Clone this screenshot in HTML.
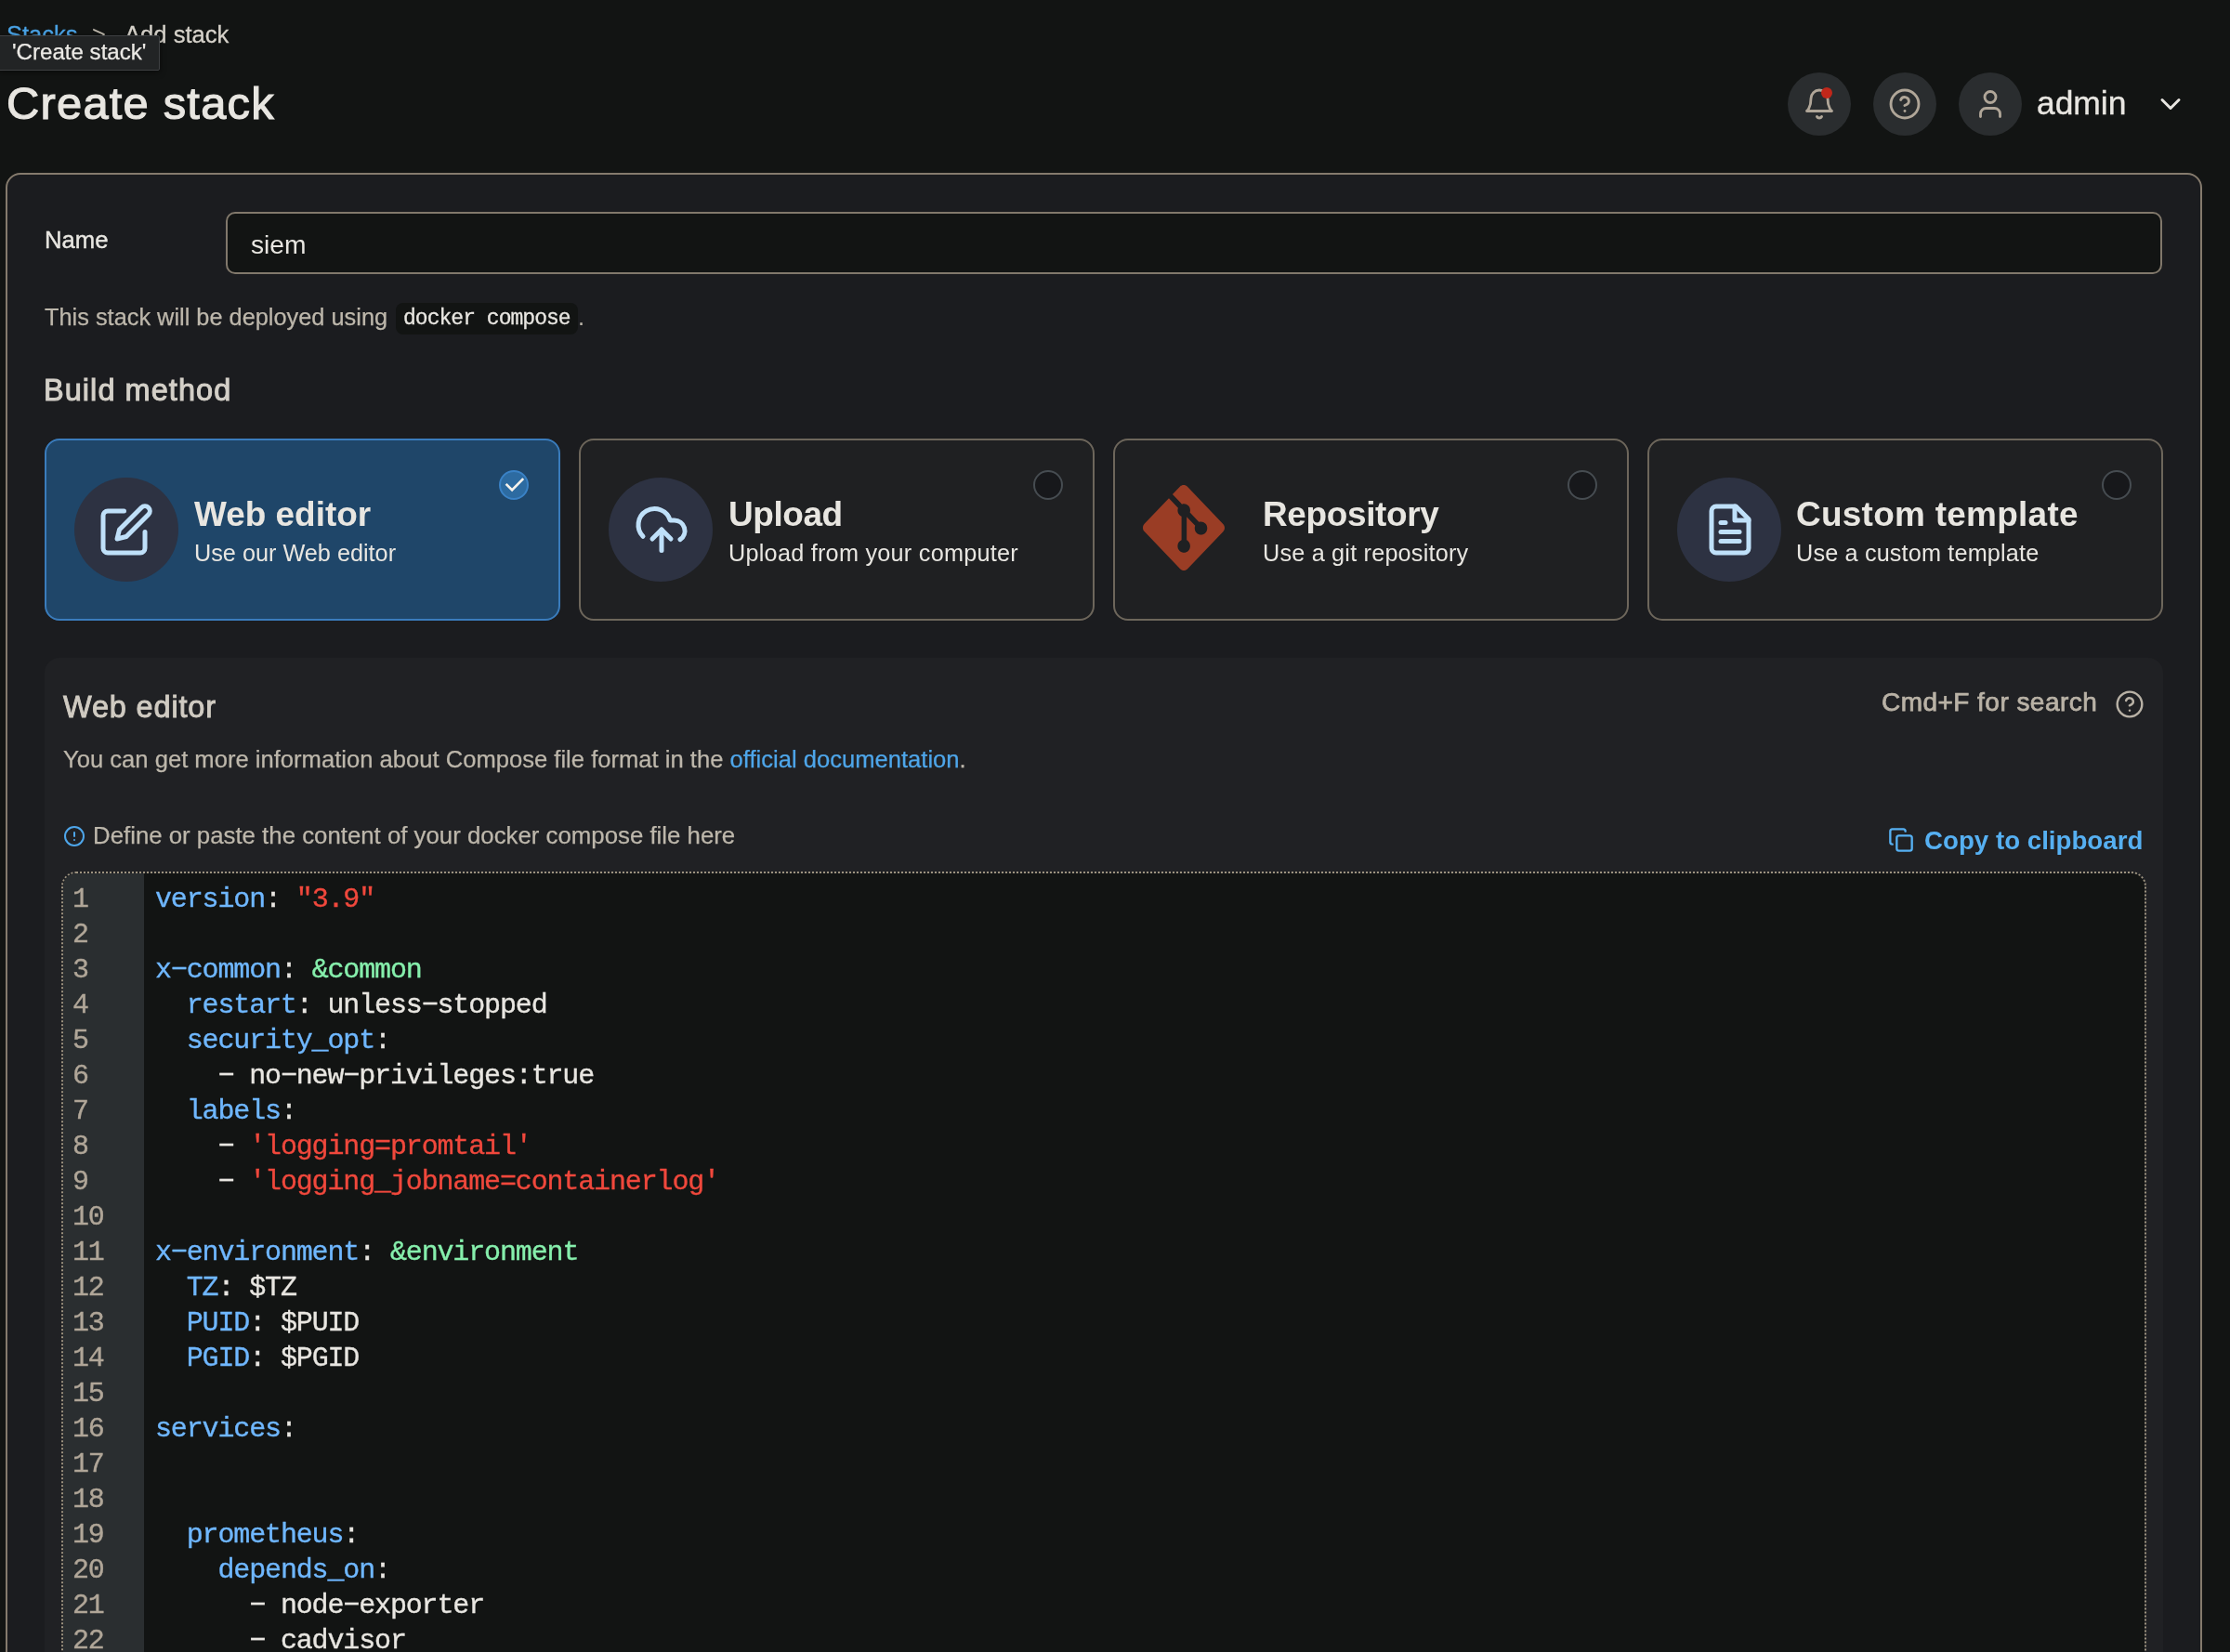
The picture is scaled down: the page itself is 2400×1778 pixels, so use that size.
<!DOCTYPE html>
<html><head><meta charset="utf-8"><title>Create stack</title>
<style>
html,body{margin:0;padding:0}
body{width:2400px;height:1778px;overflow:hidden;background:#121413;position:relative;font-family:"Liberation Sans",sans-serif;color:#e8e6e1}
.t{position:absolute;line-height:1;white-space:pre;will-change:transform}
.s{font-family:"Liberation Sans",sans-serif}
.m{font-family:"Liberation Mono",monospace}
.c{letter-spacing:-1.143px;-webkit-text-stroke:0.35px currentColor}
.abs{position:absolute;box-sizing:border-box}
svg{position:absolute;overflow:visible}
.ic{fill:none;stroke-linecap:round;stroke-linejoin:round}
.k{color:#6fb7ff}.r{color:#f0483c}.g{color:#86efac}
</style></head><body>

<div class="t s" style="left:7px;top:24.71px;font-size:25.5px;color:#4aa3e6;-webkit-text-stroke:0.3px #4aa3e6;">Stacks</div>
<div class="t s" style="left:99px;top:24.71px;font-size:25.5px;color:#bdb7ab;">&gt;</div>
<div class="t s" style="left:133.5px;top:24.63px;font-size:25.6px;color:#d6d2ca;-webkit-text-stroke:0.3px #d6d2ca;">Add stack</div>
<div class="abs" style="left:-2px;top:38px;width:174px;height:38px;background:#222425;border:1px solid #3e4042;border-radius:2px;box-shadow:0 2px 6px rgba(0,0,0,.5)"></div>
<div class="t s" style="left:12.6px;top:43.60px;font-size:24.1px;color:#eceae6;-webkit-text-stroke:0.25px #eceae6;">'Create stack'</div>
<div class="t s" style="left:6.5px;top:87.21px;font-size:48.9px;color:#e8e6e1;letter-spacing:1.2px;-webkit-text-stroke:1.1px #e8e6e1;">Create stack</div>
<div class="abs" style="left:1924px;top:78px;width:68px;height:68px;border-radius:50%;background:#2a2d2f"></div>
<div class="abs" style="left:2016px;top:78px;width:68px;height:68px;border-radius:50%;background:#2a2d2f"></div>
<div class="abs" style="left:2108px;top:78px;width:68px;height:68px;border-radius:50%;background:#2a2d2f"></div>
<svg class="ic" style="left:1940px;top:94px" width="36" height="36" viewBox="0 0 24 24" stroke="#b0a698" stroke-width="1.9"><path d="M6 8a6 6 0 0 1 12 0c0 7 3 9 3 9H3s3-2 3-9"/><path d="M10.3 21a1.94 1.94 0 0 0 3.4 0"/></svg>
<div class="abs" style="left:1960px;top:94px;width:12px;height:12px;border-radius:50%;background:#c0271a"></div>
<svg class="ic" style="left:2032px;top:94px" width="36" height="36" viewBox="0 0 24 24" stroke="#b0a698" stroke-width="1.9"><circle cx="12" cy="12" r="10"/><path d="M9.09 9a3 3 0 0 1 5.83 1c0 2-3 3-3 3"/><path d="M12 17h.01"/></svg>
<svg class="ic" style="left:2124px;top:94px" width="36" height="36" viewBox="0 0 24 24" stroke="#b0a698" stroke-width="1.9"><path d="M19 21v-2a4 4 0 0 0-4-4H9a4 4 0 0 0-4 4v2"/><circle cx="12" cy="7" r="4"/></svg>
<div class="t s" style="left:2191.8px;top:93.63px;font-size:35.4px;color:#e8e6e1;-webkit-text-stroke:0.35px #e8e6e1;">admin</div>
<svg class="ic" style="left:2318px;top:94px" width="36" height="36" viewBox="0 0 24 24" stroke="#e8e6e1" stroke-width="2"><path d="m6 9 6 6 6-6"/></svg>
<div class="abs" style="left:6px;top:186px;width:2364px;height:1700px;background:#1b1c1f;border:2px solid #857b6d;border-radius:16px"></div>
<div class="t s" style="left:48px;top:245.74px;font-size:25.7px;color:#e8e6e1;-webkit-text-stroke:0.4px #e8e6e1;">Name</div>
<div class="abs" style="left:243px;top:228px;width:2084px;height:67px;background:#121413;border:2px solid #81786b;border-radius:10px"></div>
<div class="t s" style="left:269.5px;top:248.93px;font-size:28.2px;color:#e8e6e1;">siem</div>
<div class="t s" style="left:48px;top:328.54px;font-size:25.35px;color:#bdb7ab;-webkit-text-stroke:0.25px currentColor;">This stack will be deployed using</div>
<div class="abs" style="left:426px;top:326px;width:196px;height:34px;background:#121413;border-radius:8px"></div>
<div class="t m" style="left:434px;top:332.37px;font-size:23px;color:#e8e6e1;letter-spacing:-0.97px;-webkit-text-stroke:0.3px #e8e6e1;">docker compose</div>
<div class="t s" style="left:622px;top:328.54px;font-size:25.35px;color:#bdb7ab;">.</div>
<div class="t s" style="left:47px;top:404.09px;font-size:32.5px;color:#d4d0c8;letter-spacing:1.05px;-webkit-text-stroke:1.0px #d4d0c8;">Build method</div>
<div class="abs" style="left:48px;top:472px;width:555px;height:196px;background:#1f4669;border:2px solid #3a7cbc;border-radius:16px"></div>
<div class="abs" style="left:80px;top:514px;width:112px;height:112px;border-radius:50%;background:#2d3242"></div>
<svg class="ic" style="left:106px;top:540px" width="60" height="60" viewBox="0 0 24 24" stroke="#bfe0f9" stroke-width="2"><path d="M11 4H4a2 2 0 0 0-2 2v14a2 2 0 0 0 2 2h14a2 2 0 0 0 2-2v-7"/><path d="M18.5 2.5a2.12 2.12 0 0 1 3 3L12 15l-4 1 1-4Z"/></svg>
<div class="t s" style="left:209px;top:535.62px;font-size:36.95px;color:#e8e6e1;font-weight:bold;letter-spacing:0px;">Web editor</div>
<div class="t s" style="left:209px;top:583.03px;font-size:25.25px;color:#e8e6e1;letter-spacing:0px;">Use our Web editor</div>
<div class="abs" style="left:537px;top:506px;width:32px;height:32px;border-radius:50%;background:#2d6ba1;border:2px solid #3a82c6"></div>
<svg style="left:537px;top:506px" width="32" height="32" viewBox="0 0 32 32" fill="none" stroke="#f6f2ec" stroke-width="2.7" stroke-linecap="butt" stroke-linejoin="miter"><path d="M7.6 14.9 14.1 21.4 26.2 9.1"/></svg>
<div class="abs" style="left:623px;top:472px;width:555px;height:196px;background:#1f2022;border:2px solid #6d665b;border-radius:16px"></div>
<div class="abs" style="left:655px;top:514px;width:112px;height:112px;border-radius:50%;background:#2d3242"></div>
<svg class="ic" style="left:682px;top:540px" width="60" height="60" viewBox="0 0 24 24" stroke="#bfe0f9" stroke-width="2"><path d="M4 14.899A7 7 0 1 1 15.71 8h1.79a4.5 4.5 0 0 1 2.5 8.242"/><path d="M12 12v9"/><path d="m16 16-4-4-4 4"/></svg>
<div class="t s" style="left:783.5px;top:535.62px;font-size:36.95px;color:#e8e6e1;font-weight:bold;letter-spacing:-0.4px;">Upload</div>
<div class="t s" style="left:783.5px;top:583.03px;font-size:25.25px;color:#e8e6e1;letter-spacing:0.24px;">Upload from your computer</div>
<div class="abs" style="left:1112px;top:506px;width:32px;height:32px;border-radius:50%;background:#17181b;border:2px solid #464c51"></div>
<div class="abs" style="left:1198px;top:472px;width:555px;height:196px;background:#1f2022;border:2px solid #6d665b;border-radius:16px"></div>
<svg style="left:1229.5px;top:522.3px" width="88" height="92" viewBox="0 0 24 24" preserveAspectRatio="none"><path fill="#9a3d25" d="M23.546 10.93L13.067.452c-.604-.603-1.582-.603-2.188 0L8.708 2.627l2.76 2.76c.645-.215 1.379-.07 1.889.441.516.515.658 1.258.438 1.9l2.658 2.66c.645-.223 1.387-.078 1.9.435.721.72.721 1.884 0 2.604-.719.719-1.881.719-2.6 0-.539-.541-.674-1.337-.404-1.996L12.86 8.955v6.525c.176.086.342.203.488.348.713.721.713 1.883 0 2.6-.719.721-1.889.721-2.609 0-.719-.719-.719-1.879 0-2.598.182-.18.387-.316.605-.406V8.835c-.217-.091-.424-.222-.6-.401-.545-.545-.676-1.342-.396-2.009L7.636 3.7.45 10.881c-.6.605-.6 1.584 0 2.189l10.48 10.477c.604.604 1.582.604 2.186 0l10.43-10.43c.605-.603.605-1.582 0-2.187"/></svg>
<div class="t s" style="left:1358.5px;top:535.62px;font-size:36.95px;color:#e8e6e1;font-weight:bold;letter-spacing:-0.35px;">Repository</div>
<div class="t s" style="left:1358.5px;top:583.03px;font-size:25.25px;color:#e8e6e1;letter-spacing:0.19px;">Use a git repository</div>
<div class="abs" style="left:1687px;top:506px;width:32px;height:32px;border-radius:50%;background:#17181b;border:2px solid #464c51"></div>
<div class="abs" style="left:1773px;top:472px;width:555px;height:196px;background:#1f2022;border:2px solid #6d665b;border-radius:16px"></div>
<div class="abs" style="left:1805px;top:514px;width:112px;height:112px;border-radius:50%;background:#2d3242"></div>
<svg class="ic" style="left:1832.2px;top:540px" width="60" height="60" viewBox="0 0 24 24" stroke="#bfe0f9" stroke-width="2"><path d="M14.5 2H6a2 2 0 0 0-2 2v16a2 2 0 0 0 2 2h12a2 2 0 0 0 2-2V7.5L14.5 2z"/><polyline points="14 2 14 8 20 8"/><line x1="16" x2="8" y1="13" y2="13"/><line x1="16" x2="8" y1="17" y2="17"/><line x1="10" x2="8" y1="9" y2="9"/></svg>
<div class="t s" style="left:1933px;top:535.62px;font-size:36.95px;color:#e8e6e1;font-weight:bold;letter-spacing:0.28px;">Custom template</div>
<div class="t s" style="left:1933px;top:583.03px;font-size:25.25px;color:#e8e6e1;letter-spacing:0.15px;">Use a custom template</div>
<div class="abs" style="left:2262px;top:506px;width:32px;height:32px;border-radius:50%;background:#17181b;border:2px solid #464c51"></div>
<div class="abs" style="left:48px;top:708px;width:2280px;height:1200px;background:#202124;border-radius:16px"></div>
<div class="t s" style="left:68px;top:744.59px;font-size:32.5px;color:#d0cbc2;letter-spacing:0.83px;-webkit-text-stroke:0.9px #d0cbc2;">Web editor</div>
<div class="t s" style="left:2024.5px;top:742.00px;font-size:28px;color:#b9b2a6;letter-spacing:0.46px;-webkit-text-stroke:0.75px #b9b2a6;">Cmd+F for search</div>
<svg class="ic" style="left:2276px;top:742px" width="32" height="32" viewBox="0 0 24 24" stroke="#b9b2a6" stroke-width="1.8"><circle cx="12" cy="12" r="10"/><path d="M9.09 9a3 3 0 0 1 5.83 1c0 2-3 3-3 3"/><path d="M12 17h.01"/></svg>
<div class="t s" style="left:68px;top:805.33px;font-size:25.6px;color:#bdb7ab;-webkit-text-stroke:0.25px currentColor;">You can get more information about Compose file format in the <span style="color:#4ea6ea">official documentation</span>.</div>
<svg class="ic" style="left:68px;top:888px" width="24" height="24" viewBox="0 0 24 24" stroke="#4ea6ea" stroke-width="2"><circle cx="12" cy="12" r="10"/><line x1="12" x2="12" y1="8" y2="12"/><line x1="12" x2="12.01" y1="16" y2="16"/></svg>
<div class="t s" style="left:100.2px;top:887.16px;font-size:25.8px;color:#bdb7ab;-webkit-text-stroke:0.25px currentColor;">Define or paste the content of your docker compose file here</div>
<svg class="ic" style="left:2032px;top:890px" width="28" height="28" viewBox="0 0 24 24" stroke="#56b0f2" stroke-width="2"><rect width="14" height="14" x="8" y="8" rx="2" ry="2"/><path d="M4 16c-1.1 0-2-.9-2-2V4c0-1.1.9-2 2-2h10c1.1 0 2 .9 2 2"/></svg>
<div class="t s" style="left:2071px;top:890.95px;font-size:27.7px;color:#56b0f2;font-weight:bold;">Copy to clipboard</div>
<div class="abs" style="left:66px;top:938px;width:2244px;height:900px;background:#121413;border:2px dotted #9c927f;border-radius:16px;overflow:hidden;background-clip:padding-box"><div class="abs" style="left:0;top:0;width:87px;height:900px;background:#2a2e30"></div></div>
<div class="t m c" style="left:78.3px;top:953.00px;font-size:30px;color:#b0a698;">1</div>
<div class="t m c" style="left:166.5px;top:953.00px;font-size:30px;color:#e8e6e1;"><span class="k">version</span>: <span class="r">"3.9"</span></div>
<div class="t m c" style="left:78.3px;top:991.00px;font-size:30px;color:#b0a698;">2</div>
<div class="t m c" style="left:78.3px;top:1029.01px;font-size:30px;color:#b0a698;">3</div>
<div class="t m c" style="left:166.5px;top:1029.01px;font-size:30px;color:#e8e6e1;"><span class="k">x−common</span>: <span class="g">&amp;common</span></div>
<div class="t m c" style="left:78.3px;top:1067.01px;font-size:30px;color:#b0a698;">4</div>
<div class="t m c" style="left:166.5px;top:1067.01px;font-size:30px;color:#e8e6e1;">  <span class="k">restart</span>: unless−stopped</div>
<div class="t m c" style="left:78.3px;top:1105.01px;font-size:30px;color:#b0a698;">5</div>
<div class="t m c" style="left:166.5px;top:1105.01px;font-size:30px;color:#e8e6e1;">  <span class="k">security_opt</span>:</div>
<div class="t m c" style="left:78.3px;top:1143.01px;font-size:30px;color:#b0a698;">6</div>
<div class="t m c" style="left:166.5px;top:1143.01px;font-size:30px;color:#e8e6e1;">    − no−new−privileges:true</div>
<div class="t m c" style="left:78.3px;top:1181.01px;font-size:30px;color:#b0a698;">7</div>
<div class="t m c" style="left:166.5px;top:1181.01px;font-size:30px;color:#e8e6e1;">  <span class="k">labels</span>:</div>
<div class="t m c" style="left:78.3px;top:1219.01px;font-size:30px;color:#b0a698;">8</div>
<div class="t m c" style="left:166.5px;top:1219.01px;font-size:30px;color:#e8e6e1;">    − <span class="r">'logging=promtail'</span></div>
<div class="t m c" style="left:78.3px;top:1257.01px;font-size:30px;color:#b0a698;">9</div>
<div class="t m c" style="left:166.5px;top:1257.01px;font-size:30px;color:#e8e6e1;">    − <span class="r">'logging_jobname=containerlog'</span></div>
<div class="t m c" style="left:78.3px;top:1295.01px;font-size:30px;color:#b0a698;">10</div>
<div class="t m c" style="left:78.3px;top:1333.01px;font-size:30px;color:#b0a698;">11</div>
<div class="t m c" style="left:166.5px;top:1333.01px;font-size:30px;color:#e8e6e1;"><span class="k">x−environment</span>: <span class="g">&amp;environment</span></div>
<div class="t m c" style="left:78.3px;top:1371.01px;font-size:30px;color:#b0a698;">12</div>
<div class="t m c" style="left:166.5px;top:1371.01px;font-size:30px;color:#e8e6e1;">  <span class="k">TZ</span>: $TZ</div>
<div class="t m c" style="left:78.3px;top:1409.01px;font-size:30px;color:#b0a698;">13</div>
<div class="t m c" style="left:166.5px;top:1409.01px;font-size:30px;color:#e8e6e1;">  <span class="k">PUID</span>: $PUID</div>
<div class="t m c" style="left:78.3px;top:1447.01px;font-size:30px;color:#b0a698;">14</div>
<div class="t m c" style="left:166.5px;top:1447.01px;font-size:30px;color:#e8e6e1;">  <span class="k">PGID</span>: $PGID</div>
<div class="t m c" style="left:78.3px;top:1485.01px;font-size:30px;color:#b0a698;">15</div>
<div class="t m c" style="left:78.3px;top:1523.01px;font-size:30px;color:#b0a698;">16</div>
<div class="t m c" style="left:166.5px;top:1523.01px;font-size:30px;color:#e8e6e1;"><span class="k">services</span>:</div>
<div class="t m c" style="left:78.3px;top:1561.01px;font-size:30px;color:#b0a698;">17</div>
<div class="t m c" style="left:78.3px;top:1599.01px;font-size:30px;color:#b0a698;">18</div>
<div class="t m c" style="left:78.3px;top:1637.01px;font-size:30px;color:#b0a698;">19</div>
<div class="t m c" style="left:166.5px;top:1637.01px;font-size:30px;color:#e8e6e1;">  <span class="k">prometheus</span>:</div>
<div class="t m c" style="left:78.3px;top:1675.01px;font-size:30px;color:#b0a698;">20</div>
<div class="t m c" style="left:166.5px;top:1675.01px;font-size:30px;color:#e8e6e1;">    <span class="k">depends_on</span>:</div>
<div class="t m c" style="left:78.3px;top:1713.01px;font-size:30px;color:#b0a698;">21</div>
<div class="t m c" style="left:166.5px;top:1713.01px;font-size:30px;color:#e8e6e1;">      − node−exporter</div>
<div class="t m c" style="left:78.3px;top:1751.01px;font-size:30px;color:#b0a698;">22</div>
<div class="t m c" style="left:166.5px;top:1751.01px;font-size:30px;color:#e8e6e1;">      − cadvisor</div>
</body></html>
